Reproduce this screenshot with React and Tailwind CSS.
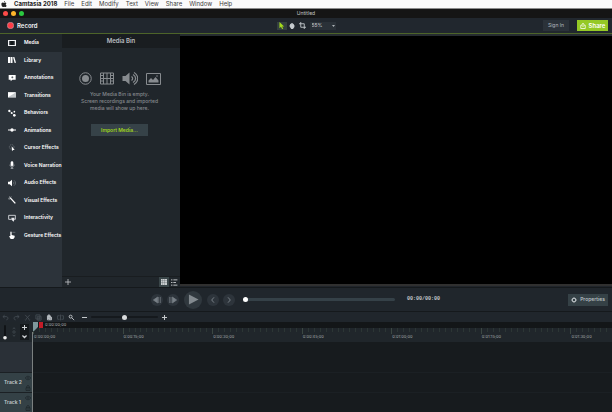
import { useState } from "react";

const menus = ["File", "Edit", "Modify", "Text", "View", "Share", "Window", "Help"];

const tabs = [
    { name: "Media", icon: <><rect x="1.5" y="4.5" width="21" height="15" fill="#11161a" stroke="#f3f4f6" strokeWidth="3" /><path d="M5 5v14M19 5v14" stroke="#aeb3b7" strokeWidth="1.5" /></> },
    { name: "Library", icon: <path d="M0 3h6v18H0zM7.500 3h6v18h-6zM15 4l4-1 5 17-4 1z" fill="#fff" /> },
    { name: "Annotations", icon: <><path d="M2 3h21v14H13l-5 5v-5H2z" fill="#fff" /><path d="M13 7v6M10 10h6" stroke="#333a41" strokeWidth="2" /></> },
    { name: "Transitions", icon: <><rect x="0" y="4" width="24" height="16" fill="#c3c8cb" /><path d="M0 4h24L0 19z" fill="#fff" /></> },
    { name: "Behaviors", icon: <><path d="M5 6l6 5 4 5 5 4" stroke="#969ca1" strokeWidth="1.5" fill="none" /><circle cx="4" cy="6" r="3.500" fill="#fff" /><circle cx="11" cy="12" r="3" fill="#fff" /><circle cx="19" cy="8" r="2.500" fill="#fff" /><circle cx="19" cy="19" r="4" fill="#fff" /></> },
    { name: "Animations", icon: <><path d="M0 12h24" stroke="#fff" strokeWidth="3" /><circle cx="12" cy="12" r="5" fill="#fff" /></> },
    { name: "Cursor Effects", icon: <><circle cx="11" cy="9" r="7" fill="none" stroke="#7b8288" strokeWidth="2" strokeDasharray="4 2" /><path d="M11 7l9 11-5 0-3 4z" fill="#fff" /></> },
    { name: "Voice Narration", icon: <><rect x="8" y="1" width="8" height="14" rx="4" fill="#fff" /><path d="M6 11c0 9 12 9 12 0M12 18v4M8 22h8" stroke="#cdd1d4" strokeWidth="2" fill="none" /></> },
    { name: "Audio Effects", icon: <><path d="M0 8h5l7-6v20l-7-6H0z" fill="#fff" /><path d="M15 8c3 2 3 6 0 8M18 4c6 4 6 12 0 16" stroke="#7b8288" strokeWidth="2" fill="none" /></> },
    { name: "Visual Effects", icon: <><path d="M6 5l16 17" stroke="#fff" strokeWidth="4" /><path d="M5 1v4M1 7h4M10 2l-1 2M2 12l2-2" stroke="#cdd1d4" strokeWidth="2" /></> },
    { name: "Interactivity", icon: <><path d="M11 16H2V4h20v12h-3" fill="none" stroke="#e5e7eb" strokeWidth="2.5" /><path d="M10 11h9v6l-2 6-6-5z" fill="#e5e7eb" /></> },
    { name: "Gesture Effects", icon: <><path d="M7 4c0-3 4-3 4 0v8l9 2v5l-4 5H8l-5-8 4-1z" fill="#fff" /><path d="M13 4h9" stroke="#7b8288" strokeWidth="2" /></> },
];

const times = ["0:00:00;00", "0:00:15;00", "0:00:30;00", "0:00:45;00", "0:01:00;00", "0:01:15;00", "0:01:30;00"];

const editTools = [
    { name: "Undo", icon: <path d="M9 4L3 9l6 5M3 9h12c7 0 7 11 0 11" />, color: "text-[#444b52]" },
    { name: "Redo", icon: <path d="M15 4l6 5-6 5M21 9H9c-7 0-7 11 0 11" />, color: "text-[#444b52]" },
    { name: "Cut", icon: <path d="M4 3l14 15M20 3L6 18M3 20a2 2 0 104-2M21 20a2 2 0 11-4-2" />, color: "text-[#444b52]" },
    { name: "Copy", icon: <path d="M3 3h14v14H3zM8 8h13v13H8zM11 13h7M11 17h7" />, color: "text-[#444b52]" },
    { name: "Paste", icon: <path d="M5 20V8l3-5h4l3 5v3M5 8h10M5 20h14v-9h-8v9M8 12v5" fill="#9aa1a7" />, color: "text-[#bfc4c8]" },
    { name: "Split", icon: <path d="M12 2v20M9 6H2v12h7M15 6h7v12h-7" />, color: "text-[#444b52]" },
    { name: "Zoom to fit", icon: <path d="M4 9a5 5 0 1010 0 5 5 0 10-10 0M13 13l8 8" />, color: "text-[#c9cdd0]" },
];

function Icon({ className, children }) {
    return (
        <svg viewBox="0 0 24 24" className={className} fill="none" stroke="currentColor" strokeWidth="3" aria-hidden="true">
            {children}
        </svg>
    );
}

function RoundButton({ label, children }) {
    return (
        <button aria-label={label} className="flex size-3 items-center justify-center rounded-full bg-[#2d343b] text-[#788087]">
            <Icon className="size-2">{children}</Icon>
        </button>
    );
}

function Track({ name }) {
    return (
        <div className="flex h-5 border-t border-[#1b2024]">
            <div className="flex w-[33px] shrink-0 items-center justify-between bg-[#344146] pl-1 pr-[2px]">
                <span className="whitespace-nowrap text-[5px] font-semibold text-[#c3c9cc]">{name}</span>
                <div className="flex flex-col gap-1 text-[#1d2529]">
                    <button aria-label={`Show ${name}`} className="block">
                        <Icon className="size-[6px]"><path d="M1 12c6-9 16-9 22 0-6 9-16 9-22 0z" /><circle cx="12" cy="12" r="2" /></Icon>
                    </button>
                    <button aria-label={`Lock ${name}`} className="block">
                        <Icon className="size-[6px]"><path d="M4 11h16v11H4zM7 11V6c0-5 10-5 10 0v5M12 14v5" /></Icon>
                    </button>
                </div>
            </div>
            <div className="flex-1 bg-[#171b1e]" />
        </div>
    );
}

export default function App() {
    const [active, setActive] = useState("Media");
    const [zoom, setZoom] = useState("55%");

    return (
        <div className="flex min-h-screen flex-col overflow-hidden bg-[#20252b] font-['Inter',sans-serif] text-[5px] leading-none text-gray-300">
            {/* System menu */}
            <nav className="flex h-[9px] items-center gap-[7px] border-b border-[#8b8b8b] bg-[#fafafa] pl-[1px] text-[6px] text-[#3c3c3c]">
                <svg viewBox="0 0 24 24" className="size-[6px]" fill="#222" aria-hidden="true">
                    <path d="M16 0c0 3-2 5-4 5 0-3 2-5 4-5zM12 7c2 0 3-1 5-1s4 1 5 3c-4 2-4 8 1 10-2 4-4 5-5 5-2 0-3-1-5-1s-3 1-5 1C3 24-3 7 7 6c2 0 3 1 5 1z" />
                </svg>
                <button className="font-bold text-[#222]">Camtasia 2018</button>
                {menus.map((m) => (
                    <button key={m}>{m}</button>
                ))}
            </nav>

            {/* Window title */}
            <div className="grid h-[9px] grid-cols-[1fr_auto_1fr] items-center bg-[#151515]">
                <div className="flex gap-[3px] pl-[3px]">
                    <button aria-label="Close" className="size-[5px] rounded-full bg-[#fc4b48]" />
                    <button aria-label="Minimize" className="size-[5px] rounded-full bg-[#fdb52b]" />
                    <button aria-label="Full screen" className="size-[5px] rounded-full bg-[#2bc840]" />
                </div>
                <h1 className="text-[5px] text-[#c4c4c4]">Untitled</h1>
            </div>

            {/* Toolbar */}
            <header className="grid h-4 grid-cols-[1fr_auto_1fr] items-center border-b border-[#4d6429] bg-[#21272e]">
                <button className="flex items-center gap-[3px] pl-[7px] text-[6px] font-semibold text-gray-100">
                    <svg viewBox="0 0 24 24" className="size-[7px]" aria-hidden="true"><circle cx="12" cy="12" r="11" fill="#ff3b46" stroke="#b9a3a8" strokeWidth="2" /></svg>
                    Record
                </button>
                <div className="flex items-center gap-[1px]">
                    <button aria-label="Select" className="flex h-2 w-[10px] items-center justify-center bg-[#34403f]">
                        <svg viewBox="0 0 24 24" className="size-[7px]" fill="#a5dc1d"><path d="M5 0l16 15h-7l4 8-4 1-4-8-5 5z" /></svg>
                    </button>
                    <button aria-label="Pan" className="flex h-2 w-[9px] items-center justify-center">
                        <svg viewBox="0 0 24 24" className="size-[6px]" fill="#c5cace"><path d="M1 9l3 1V4l3-1 1 4V1l3-1 1 6 1-6 3 1v6l2-4 2 1v6l3-1-2 8-5 7H9l-6-9z" /></svg>
                    </button>
                    <button aria-label="Crop" className="flex h-2 w-[9px] items-center justify-center text-[#c5cace]">
                        <Icon className="size-[7px]"><path d="M6 0v18h18M0 6h18v18" /></Icon>
                    </button>
                    <div className="relative ml-[2px] flex">
                        <select
                            aria-label="Canvas zoom"
                            value={zoom}
                            onChange={(e) => setZoom(e.target.value)}
                            className="h-2 w-[26px] appearance-none bg-[#2a3138] pl-[2px] text-[5px] leading-none text-[#d0d3d6]"
                        >
                            <option>55%</option>
                            <option>100%</option>
                        </select>
                        <svg viewBox="0 0 6 4" className="pointer-events-none absolute right-[1px] top-[3px] h-[2px] w-[3px]" fill="#abb0b5"><path d="M0 0h6L3 4z" /></svg>
                    </div>
                </div>
                <div className="flex justify-end gap-2 pr-1">
                    <button className="h-[11px] w-[26px] bg-[#2b3239] text-[#b5babf]">Sign In</button>
                    <button className="flex h-[11px] w-[31px] items-center justify-center gap-[3px] bg-[#95c925] text-[6px] font-semibold text-white">
                        <Icon className="size-[6px]"><path d="M8 9H3v13h18V9h-5M12 16V2M7 6l5-5 5 5" /></Icon>
                        Share
                    </button>
                </div>
            </header>

            <main className="flex flex-1">
                <aside className="w-[62px] shrink-0 bg-[#2c333a]">
                    <ul className="grid h-[210px] grid-rows-12">
                        {tabs.map((t) => (
                            <li key={t.name} className={t.name === active ? "flex bg-[#20262b]" : "flex"}>
                                <button
                                    onClick={() => setActive(t.name)}
                                    className="flex w-full items-center gap-2 whitespace-nowrap pl-2 text-[5px] font-semibold text-white"
                                >
                                    <svg viewBox="0 0 24 24" className="size-2 shrink-0" aria-hidden="true">{t.icon}</svg>
                                    {t.name}
                                </button>
                            </li>
                        ))}
                    </ul>
                </aside>

                <section className="flex w-[118px] shrink-0 flex-col bg-[#20262b]">
                    <h2 className="flex h-[14px] items-center justify-center bg-[#191d20] text-[6px] font-semibold text-[#bbbec1]">Media Bin</h2>
                    <div className="flex flex-1 flex-col items-center pr-[3px] pt-6 text-[#878b8f]">
                        <div className="flex items-center gap-2">
                            <svg viewBox="0 0 26 26" className="size-[13px]" fill="none" stroke="currentColor" strokeWidth="2"><circle cx="13" cy="13" r="11.5" /><circle cx="13" cy="13" r="7" fill="currentColor" stroke="none" /></svg>
                            <svg viewBox="0 0 28 26" className="h-[13px] w-[14px]" fill="none" stroke="currentColor" strokeWidth="2"><path d="M1 2h26v22H1zM7 2v22M21 2v22M7 13h14M1 7h6M1 13h6M1 18h6M21 7h6M21 13h6M21 18h6M14 2v22" /></svg>
                            <svg viewBox="0 0 32 26" className="h-[13px] w-4" fill="none" stroke="currentColor" strokeWidth="2.5"><path d="M1 8h6l8-7v24l-8-7H1z" fill="currentColor" stroke="none" /><path d="M19 9c3 2 3 6 0 8M22 5c7 4 7 12 0 16M24 1c10 6 10 18 0 24" /></svg>
                            <svg viewBox="0 0 30 24" className="h-3 w-[15px]" fill="none" stroke="currentColor" strokeWidth="2"><path d="M1 1h28v22H1z" /><path d="M5 19v-4l5-5 4 4 5-6 6 7v4z" fill="currentColor" stroke="none" /><circle cx="22" cy="6" r="1.5" fill="currentColor" stroke="none" /></svg>
                        </div>
                        <p className="mt-[6px] whitespace-nowrap text-center text-[5px] font-medium leading-[7px]">
                            Your Media Bin is empty.<br />
                            Screen recordings and imported<br />
                            media will show up here.
                        </p>
                        <button className="mt-3 h-3 w-[57px] bg-[#364248] text-[5px] font-semibold text-[#a0d51e]">Import Media...</button>
                    </div>
                    <div className="flex h-[11px] items-center border-t border-[#191d20] pl-[3px] text-[#cfd2d5]">
                        <button aria-label="Add media"><Icon className="size-[6px]"><path d="M12 0v24M0 12h24" /></Icon></button>
                        <button aria-label="Thumbnails" className="ml-auto flex h-[10px] w-[10px] items-center justify-center bg-[#3a4649]">
                            <svg viewBox="0 0 24 24" className="size-[6px]" fill="#c8ccce"><path d="M0 0h7v7H0zM8 0h7v7H8zM16 0h8v7h-8zM0 8h7v7H0zM8 8h7v7H8zM16 8h8v7h-8zM0 16h7v8H0zM8 16h7v8H8zM16 16h8v8h-8z" /></svg>
                        </button>
                        <button aria-label="Details" className="flex w-[11px] justify-center">
                            <Icon className="size-[7px]"><path d="M0 3h5M8 3h14M0 12h5M8 12h9M0 21h5M8 21h14" /></Icon>
                        </button>
                    </div>
                </section>

                <section aria-label="Canvas" className="mb-[1px] flex-1 border-y-2 border-b-[#303030] border-t-[#262c30] bg-black" />
            </main>

            {/* Playback */}
            <div className="flex h-[25px] items-center border-b border-t border-[#15191c] bg-[#20262c] pl-[151px] pr-1">
                <div className="flex items-center gap-1">
                    <RoundButton label="Previous frame"><path d="M14 3v18L1 12zM17 3v18M22 3v18" fill="currentColor" strokeWidth="2" /></RoundButton>
                    <RoundButton label="Next frame"><path d="M10 3v18l13-9zM6 3v18M2 3v18" fill="currentColor" strokeWidth="2" /></RoundButton>
                    <button aria-label="Play" className="mx-[1px] flex size-[18px] items-center justify-center rounded-full bg-[#30383e]">
                        <svg viewBox="0 0 24 24" className="ml-[1px] size-[11px]" fill="#838a8f"><path d="M2 1l21 11L2 23z" /></svg>
                    </button>
                    <RoundButton label="Previous marker"><path d="M15 4l-7 8 7 8" /></RoundButton>
                    <RoundButton label="Next marker"><path d="M9 4l7 8-7 8" /></RoundButton>
                </div>
                <input
                    type="range"
                    aria-label="Playhead"
                    defaultValue="0"
                    className="ml-2 h-[3px] w-[152px] appearance-none rounded-full bg-[#354148] [&::-webkit-slider-thumb]:size-[5px] [&::-webkit-slider-thumb]:appearance-none [&::-webkit-slider-thumb]:rounded-full [&::-webkit-slider-thumb]:bg-white"
                />
                <span className="ml-3 font-['Liberation_Mono',monospace] text-[5px] font-bold text-[#c5c9cc]">00:00/00:00</span>
                <button className="ml-auto flex h-3 w-10 items-center justify-center gap-[3px] bg-[#354146] font-medium text-[#c0c6c9]">
                    <Icon className="size-[6px]"><circle cx="12" cy="12" r="7" strokeWidth="4" /><path d="M12 0v4M12 20v4M0 12h4M20 12h4M4 4l3 3M17 17l3 3M20 4l-3 3M7 17l-3 3" /></Icon>
                    Properties
                </button>
            </div>

            {/* Timeline tools */}
            <div className="flex h-[10px] items-center bg-[#20262c] pl-[2px]">
                <div className="flex gap-1">
                    {editTools.map((t) => (
                        <button key={t.name} aria-label={t.name} className={t.color}>
                            <Icon className="size-[7px]">{t.icon}</Icon>
                        </button>
                    ))}
                </div>
                <button aria-label="Zoom out" className="ml-[7px] text-[#c5c9cc]"><Icon className="size-[5px]"><path d="M0 12h24" strokeWidth="5" /></Icon></button>
                <input
                    type="range"
                    aria-label="Timeline zoom"
                    defaultValue="50"
                    className="ml-1 h-[2px] w-[67px] appearance-none rounded-full bg-[#15191d] [&::-webkit-slider-thumb]:size-[5px] [&::-webkit-slider-thumb]:appearance-none [&::-webkit-slider-thumb]:rounded-full [&::-webkit-slider-thumb]:bg-[#d8dadc]"
                />
                <button aria-label="Zoom in" className="ml-1 text-[#c5c9cc]"><Icon className="size-[5px]"><path d="M0 12h24M12 0v24" strokeWidth="5" /></Icon></button>
            </div>

            {/* Timeline */}
            <section className="relative">
                <div className="flex h-5">
                    <div className="flex w-[33px] shrink-0 items-center justify-between bg-[#20262b] pl-[3px] pr-1 text-[#cfd2d5]">
                        <svg viewBox="0 0 10 36" className="h-[15px] w-1" aria-hidden="true"><path d="M3 0h4v30H3z" fill="#0d1012" /><circle cx="5" cy="31" r="4.5" fill="#eee" /></svg>
                        <svg viewBox="0 0 10 24" className="h-[10px] w-1" fill="none" stroke="#424b52" strokeWidth="2" aria-hidden="true"><path d="M2 5l3-4 3 4M2 19l3 4 3-4" /><circle cx="5" cy="12" r="3" /></svg>
                        <div className="flex flex-col gap-1 bg-[#15191c] px-[2px] py-[1px]">
                            <button aria-label="Add track" className="block"><Icon className="size-[5px]"><path d="M12 0v24M0 12h24" strokeWidth="5" /></Icon></button>
                            <button aria-label="Collapse tracks" className="block"><Icon className="size-[5px]"><path d="M2 7l10 10L22 7" strokeWidth="6" /></Icon></button>
                        </div>
                    </div>
                    <div className="min-w-0 flex-1 overflow-hidden">
                        <div className="flex h-[6px] items-center bg-[#131618] pl-3 text-[4px] text-[#aeb2b5]">0:00:00;00</div>
                        <div className="grid h-[14px] w-[627px] grid-cols-7 bg-[#20262b]">
                            {times.map((t) => (
                                <div key={t}>
                                    <div className="flex h-[5px]">
                                        {Array.from({ length: 15 }, (_, i) => (
                                            <span key={i} className={i === 0 ? "h-[6px] flex-1 border-l border-[#3b4742]" : "h-1 flex-1 border-l border-[#2c3635]"} />
                                        ))}
                                    </div>
                                    <span className="block pl-[1px] pt-[2px] text-[4px] text-[#a1a6a9]">{t}</span>
                                </div>
                            ))}
                        </div>
                    </div>
                </div>
                <div className="flex h-[30px]">
                    <div className="w-[33px] shrink-0 bg-[#2a3037]" />
                    <div className="flex-1 bg-[#171b1e]" />
                </div>
                <Track name="Track 2" />
                <Track name="Track 1" />

                {/* Playhead marker */}
                <div className="pointer-events-none absolute inset-y-0 left-8 w-3">
                    <svg viewBox="0 0 11 10" className="h-[10px] w-[11px]" aria-hidden="true"><path d="M1 0h5v5L2 9H1z" fill="#7e979b" /><path d="M7 0h4v6H7z" fill="#c31c28" /></svg>
                    <div className="h-20 w-[1px] bg-[#7b8080]" />
                </div>
            </section>
        </div>
    );
}
